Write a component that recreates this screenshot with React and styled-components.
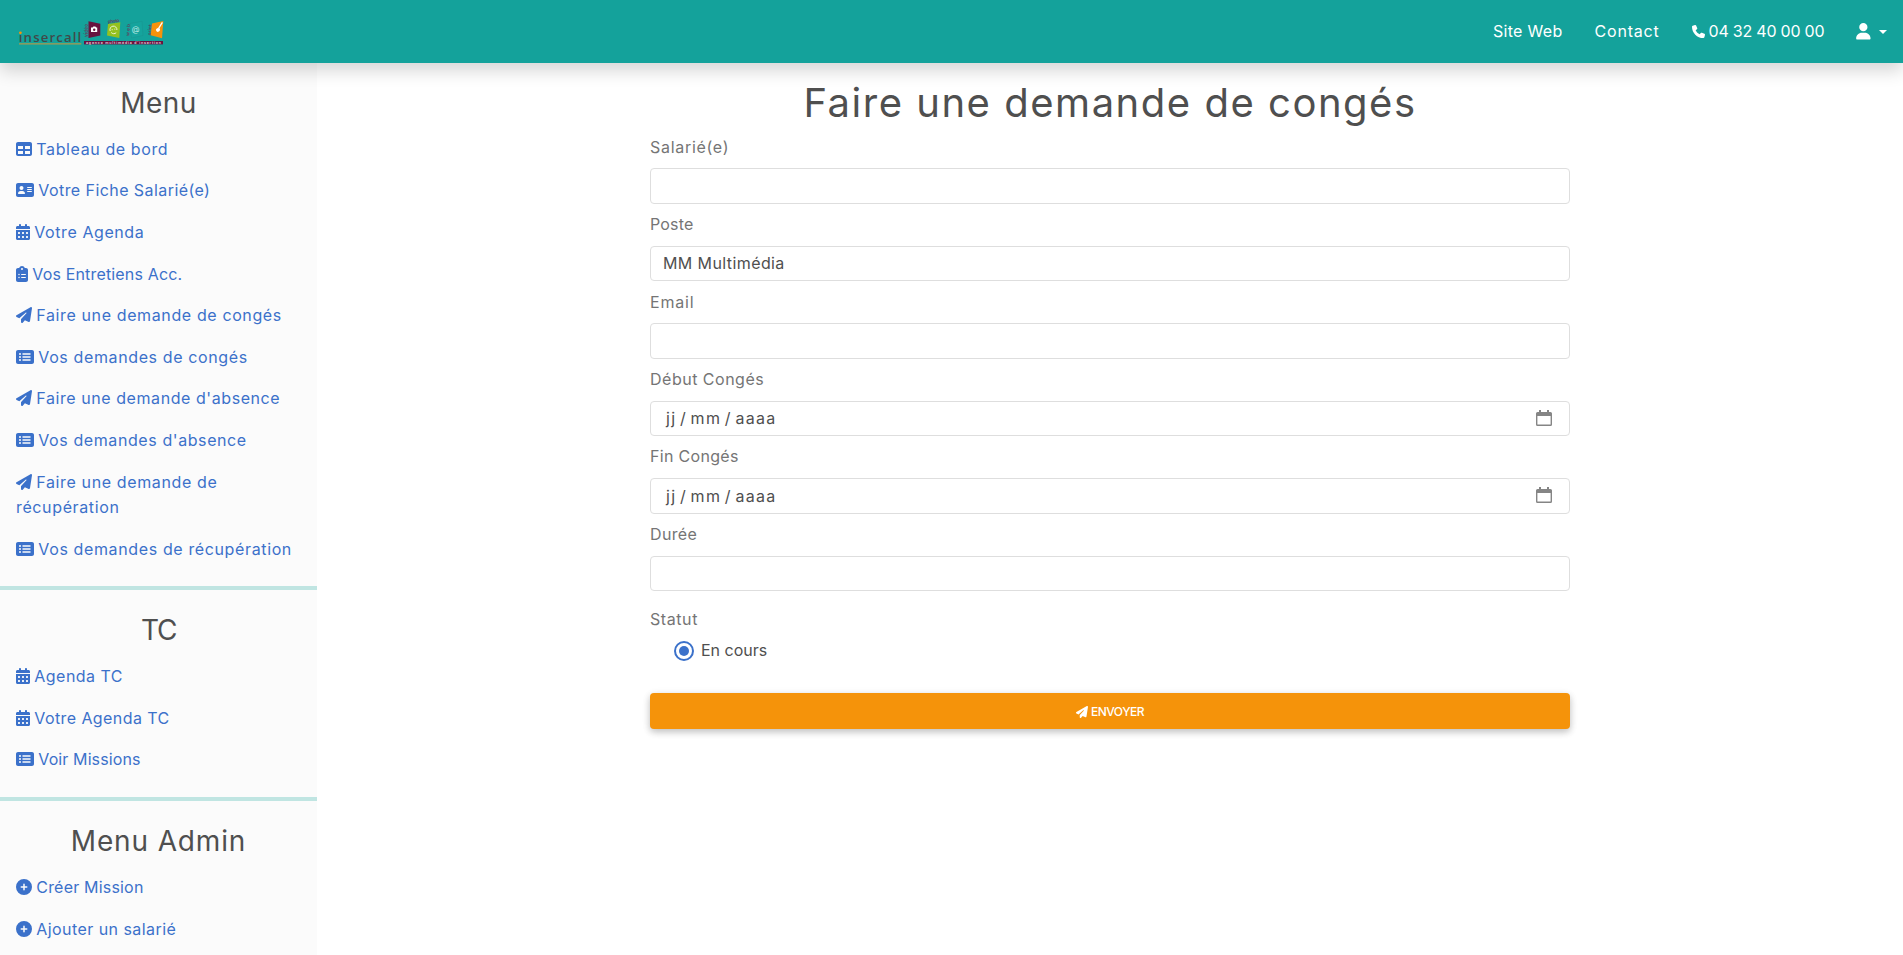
import React from 'react';
import styled, { createGlobalStyle } from 'styled-components';
import {
  FaTable, FaAddressCard, FaCalendarDays, FaClipboardList, FaPaperPlane,
  FaRectangleList, FaCirclePlus, FaPhone, FaUser,
} from 'react-icons/fa6';

const GlobalStyle = createGlobalStyle`
  *, *::before, *::after { box-sizing: border-box; }
  body {
    margin: 0;
    background: #fff;
    color: #4f4f4f;
    font: 400 16px/1.6 Inter, sans-serif;
    overflow: hidden;
  }
`;

const Page = styled.div`
  display: flex;
  flex-direction: column;
  height: 955px;
  overflow: hidden;
`;

const Navbar = styled.header`
  position: relative;
  z-index: 2;
  flex: none;
  display: flex;
  align-items: center;
  justify-content: space-between;
  height: 63px;
  padding: 0 16px 0 18px;
  background: #14a29b;
  box-shadow: 0 8px 16px rgba(0, 0, 0, 0.16);
`;

const Logo = styled.svg`
  display: block;
  width: 146px;
  height: 30px;
`;

const NavLinks = styled.nav`
  display: flex;
  align-items: center;
  gap: 32px;
  color: #fff;
`;

const NavLink = styled.a`
  display: flex;
  align-items: center;
  gap: ${(p) => p.$gap || 4}px;
  height: 26px;
  white-space: nowrap;
  letter-spacing: ${(p) => p.$track || 0}px;
  svg { width: ${(p) => p.$iconWidth || 13}px; height: ${(p) => p.$icon || 13}px; }
`;

const Caret = styled.span`
  border: 4px solid transparent;
  border-top-color: #fff;
  border-bottom: 0;
`;

const Body = styled.div`
  flex: 1;
  display: flex;
  min-height: 0;
`;

const Sidebar = styled.aside`
  flex: none;
  width: 317px;
  padding-top: 23.8px;
  background: #fbfbfb;
  overflow: hidden;
`;

const SectionTitle = styled.h3`
  margin: 0 0 16.4px;
  font-size: 28px;
  font-weight: 400;
  line-height: 33.6px;
  text-align: center;
  letter-spacing: ${(p) => p.$track}px;
`;

const MenuItem = styled.a`
  display: block;
  margin: 0 16px 16px;
  color: #3b71ca;
  letter-spacing: ${(p) => p.$track}px;
  svg {
    width: ${(p) => p.$iconWidth}px;
    height: 16px;
    margin-right: 4.3px;
    vertical-align: -2px;
  }
`;

const Divider = styled.hr`
  height: 4px;
  margin: 24px 0;
  border: 0;
  background: #c0e5e2;
`;

const Main = styled.main`
  flex: 1;
  display: flex;
  justify-content: center;
  padding-top: 15.6px;
`;

const Form = styled.form`
  width: 920px;
`;

const Title = styled.h1`
  margin: 0 0 8px;
  font-size: 40px;
  font-weight: 400;
  line-height: 48px;
  text-align: center;
  letter-spacing: 1.52px;
  white-space: nowrap;
`;

const Field = styled.div`
  margin-bottom: 8.2px;
`;

const Label = styled.label`
  display: block;
  margin-bottom: ${(p) => (p.$tight ? 6 : 8)}px;
  color: #757575;
  letter-spacing: ${(p) => p.$track}px;
`;

const Control = styled.div`
  display: flex;
  align-items: center;
  justify-content: space-between;
  height: 35.7px;
  padding: 1px ${(p) => (p.$date ? 17 : 12)}px 0 ${(p) => (p.$date ? 15 : 12)}px;
  border: 1px solid #dedede;
  border-radius: 4px;
  letter-spacing: ${(p) => p.$track || 0}px;
  word-spacing: ${(p) => (p.$date ? -2.2 : 0)}px;
`;

const DateIcon = styled.svg`
  width: 16px;
  height: 16px;
  margin-top: -2px;
`;

const Status = styled.div`
  padding-top: 7.4px;
`;

const RadioRow = styled.label`
  display: flex;
  align-items: center;
  gap: 7px;
  height: 25.6px;
  padding-left: 24px;
`;

const Radio = styled.span`
  display: grid;
  place-items: center;
  width: 20px;
  height: 20px;
  border: 2px solid #3b71ca;
  border-radius: 50%;
  &::after {
    content: '';
    width: 10px;
    height: 10px;
    border-radius: 50%;
    background: #3b71ca;
  }
`;

const Submit = styled.button`
  display: flex;
  align-items: center;
  justify-content: center;
  gap: 3px;
  width: 100%;
  height: 36px;
  margin-top: 29.5px;
  padding-top: 2px;
  border: 0;
  border-radius: 4px;
  background: #f5930a;
  color: #fff;
  font: 500 12px/18px Inter, sans-serif;
  letter-spacing: -0.48px;
  box-shadow: 0 3px 7px rgba(0, 0, 0, 0.2), 0 2px 10px rgba(0, 0, 0, 0.08);
  svg { height: 12px; width: 12px; }
`;

/* icon, its width at 16px height, text, letter spacing */
const menu = [
  [FaTable, 16, 'Tableau de bord', 0.61],
  [FaAddressCard, 18, 'Votre Fiche Salarié(e)', 0.43],
  [FaCalendarDays, 14, 'Votre Agenda', 0.58],
  [FaClipboardList, 12, 'Vos Entretiens Acc.', 0.16],
  [FaPaperPlane, 16, 'Faire une demande de congés', 0.62],
  [FaRectangleList, 18, 'Vos demandes de congés', 0.62],
  [FaPaperPlane, 16, "Faire une demande d'absence", 0.57],
  [FaRectangleList, 18, "Vos demandes d'absence", 0.59],
  [FaPaperPlane, 16, 'Faire une demande de récupération', 0.63],
  [FaRectangleList, 18, 'Vos demandes de récupération', 0.63],
];
const menuTC = [
  [FaCalendarDays, 14, 'Agenda TC', 0.47],
  [FaCalendarDays, 14, 'Votre Agenda TC', 0.41],
  [FaRectangleList, 18, 'Voir Missions', 0.11],
];
const menuAdmin = [
  [FaCirclePlus, 16, 'Créer Mission', 0.19],
  [FaCirclePlus, 16, 'Ajouter un salarié', 0.44],
];

function MenuSection({ title, track, items }) {
  return (
    <section>
      <SectionTitle $track={track}>{title}</SectionTitle>
      {items.map(([Icon, width, text, t]) => (
        <MenuItem key={text} $track={t} $iconWidth={width}><Icon />{text}</MenuItem>
      ))}
    </section>
  );
}

function InsercallLogo() {
  return (
    <Logo viewBox="18 17 146 30">
      <g fontFamily="'Open Sans', sans-serif" fontSize="13.2" fontWeight="600" fill="#404949">
        <text x="18.8" y="42.3" textLength="62.5">ınsercall</text>
      </g>
      <circle cx="20.4" cy="32.8" r="1.4" fill="#f7930b" />
      <rect x="19" y="43.2" width="62.3" height="1.3" fill="#a39a52" />
      <g fontFamily="Inter, sans-serif" fontSize="4.6" fontWeight="700" fill="#5d4864">
        <text transform="translate(88 37) rotate(-90)" textLength="13">vidéo</text>
        <text transform="translate(108 23.2) rotate(-6)" textLength="11.5">photo</text>
        <text transform="translate(129.3 36) rotate(-86)" textLength="12">web</text>
        <text transform="translate(151 35.6) rotate(-86)" textLength="11">print</text>
      </g>
      <path d="M88.500 21.300 L100.300 23.700 V35.600 L88.500 38Z" fill="#68123f" />
      <path d="M108 24 L120.300 22.200 L119.300 38 L107 35.500Z" fill="#95c11f" />
      <path d="M130 23.500 L142 21.300 L143 35.500 L131.500 38Z" fill="#15a49d" stroke="#1b928f" strokeWidth=".5" />
      <path d="M152 23.400 L163.300 21 L162 38.200 L150.700 35.200Z" fill="#f7920b" />
      <path d="M91 27.500 h1.600 l.8-1 h2 l.8 1 h1 v4.600 h-6.200z" fill="#fff" />
      <circle cx="94.200" cy="29.800" r="1.200" fill="#68123f" />
      <path d="M110.200 31 a3.500 3.500 0 1 1 6.700-1 M111.200 32.500 a3.400 3.400 0 0 0 5 .2 M112.200 29.200 v1 M114.800 28.600 v1" fill="none" stroke="#eef5d5" strokeWidth="1" />
      <text x="131.700" y="32.200" fontFamily="Inter, sans-serif" fontSize="8" fill="#bfe9e4">@</text>
      <path d="M162.400 22.300 L158.600 28.300" stroke="#fff" strokeWidth="1.300" />
      <path d="M156 29.300 q2-2.400 3.800-.7 q1 2.500-2.300 3.500 q-1.800-.5-1.500-2.800z" fill="#fff" />
      <rect x="84" y="41" width="79" height="3.400" fill="#68123f" />
      <text x="86" y="43.900" fontFamily="Inter, sans-serif" fontSize="3.600" fontWeight="700" fill="#d8bccb" textLength="75">agence multimédia d'insertion</text>
    </Logo>
  );
}

function CalendarGlyph() {
  return (
    <DateIcon viewBox="0 0 16 16">
      <path d="M3 0h2v2h6V0h2v2h1.500A1.500 1.500 0 0 1 16 3.500v11a1.500 1.500 0 0 1-1.500 1.500h-13A1.500 1.500 0 0 1 0 14.500v-11A1.500 1.500 0 0 1 1.500 2H3z M1.400 6v8.600h13.200V6z" fillRule="evenodd" fill="#858585" />
    </DateIcon>
  );
}

function FormField({ label, track, date, value, valueTrack }) {
  return (
    <Field>
      <Label $track={track}>{label}</Label>
      <Control $date={date} $track={valueTrack}>
        <span>{value}</span>
        {date && <CalendarGlyph />}
      </Control>
    </Field>
  );
}

export default function App() {
  return (
    <Page>
      <GlobalStyle />
      <Navbar>
        <InsercallLogo />
        <NavLinks>
          <NavLink $track={0.3}>Site Web</NavLink>
          <NavLink $track={0.8}>Contact</NavLink>
          <NavLink $track={-0.22}><FaPhone />04 32 40 00 00</NavLink>
          <NavLink $gap={8} $icon={16.5} $iconWidth={14.7}><FaUser /><Caret /></NavLink>
        </NavLinks>
      </Navbar>
      <Body>
        <Sidebar>
          <MenuSection title="Menu" track={0.4} items={menu} />
          <Divider />
          <MenuSection title="TC" track={-1.3} items={menuTC} />
          <Divider />
          <MenuSection title="Menu Admin" track={0.85} items={menuAdmin} />
        </Sidebar>
        <Main>
          <Form>
            <Title>Faire une demande de congés</Title>
            <FormField label="Salarié(e)" track={0.7} />
            <FormField label="Poste" track={0.18} value="MM Multimédia" valueTrack={0.4} />
            <FormField label="Email" track={0.8} />
            <FormField label="Début Congés" track={0.5} date value="jj / mm / aaaa" valueTrack={1.3} />
            <FormField label="Fin Congés" track={0.31} date value="jj / mm / aaaa" valueTrack={1.3} />
            <FormField label="Durée" track={0.35} />
            <Status>
              <Label as="div" $tight $track={0.58}>Statut</Label>
              <RadioRow><Radio />En cours</RadioRow>
            </Status>
            <Submit type="button"><FaPaperPlane />ENVOYER</Submit>
          </Form>
        </Main>
      </Body>
    </Page>
  );
}
